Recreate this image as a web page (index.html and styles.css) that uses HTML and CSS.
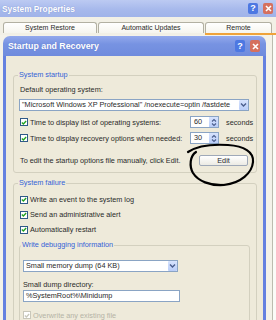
FILE: index.html
```html
<!DOCTYPE html>
<html>
<head>
<meta charset="utf-8">
<link rel="stylesheet" href="styles.css">
</head>
<body>
<div class="sysprops">
  <div class="outer-title">
    <span class="title">System Properties</span>
    <span class="tbtns">
      <span class="tb help">?</span>
      <span class="tb close"><svg width="7" height="7" viewBox="0 0 7 7"><path d="M1 1L6 6M6 1L1 6" stroke="#fff" stroke-width="1.6"/></svg></span>
    </span>
  </div>
  <div class="tabs">
    <div class="tab t1">System Restore</div>
    <div class="tab t2">Automatic Updates</div>
    <div class="tab t3">Remote</div>
  </div>
  <div class="tabline"></div>
  <div class="panel"><div class="panel-edge"></div></div>
</div>

<div class="dialog">
  <div class="dlg-title">
    <span class="title big">Startup and Recovery</span>
    <span class="tbtns">
      <span class="tb help">?</span>
      <span class="tb close"><svg width="7" height="7" viewBox="0 0 7 7"><path d="M1 1L6 6M6 1L1 6" stroke="#fff" stroke-width="1.6"/></svg></span>
    </span>
  </div>
  <div class="dlg-body">
    <fieldset class="grp g1">
      <legend>System startup</legend>
      <div class="lbl">Default operating system:</div>
      <div class="select wide">
        <span class="val">"Microsoft Windows XP Professional" /noexecute=optin /fastdete</span>
        <span class="dd"><svg width="7" height="6" viewBox="0 0 7 6"><path d="M1 1.5L3.5 4L6 1.5" fill="none" stroke="#4a5d8c" stroke-width="1.4"/></svg></span>
      </div>
      <div class="row r1">
        <span class="cb"><svg width="7" height="7" viewBox="0 0 7 7"><path d="M1 3.5L2.8 5.3L6 1.8" fill="none" stroke="#22a322" stroke-width="1.6"/></svg></span>
        <span class="rl">Time to display list of operating systems:</span>
        <span class="spin"><span class="sv">60</span><span class="sa"><svg width="6" height="9" viewBox="0 0 6 9"><path d="M1 3.5L3 1.5L5 3.5M1 5.5L3 7.5L5 5.5" fill="none" stroke="#4a5d8c" stroke-width="1.1"/></svg></span></span>
        <span class="sec">seconds</span>
      </div>
      <div class="row r2">
        <span class="cb"><svg width="7" height="7" viewBox="0 0 7 7"><path d="M1 3.5L2.8 5.3L6 1.8" fill="none" stroke="#22a322" stroke-width="1.6"/></svg></span>
        <span class="rl">Time to display recovery options when needed:</span>
        <span class="spin"><span class="sv">30</span><span class="sa"><svg width="6" height="9" viewBox="0 0 6 9"><path d="M1 3.5L3 1.5L5 3.5M1 5.5L3 7.5L5 5.5" fill="none" stroke="#4a5d8c" stroke-width="1.1"/></svg></span></span>
        <span class="sec">seconds</span>
      </div>
      <div class="editrow">
        <span class="el">To edit the startup options file manually, click Edit.</span>
        <span class="btn">Edit</span>
      </div>
    </fieldset>

    <fieldset class="grp g2">
      <legend>System failure</legend>
      <div class="crow"><span class="cb"><svg width="7" height="7" viewBox="0 0 7 7"><path d="M1 3.5L2.8 5.3L6 1.8" fill="none" stroke="#22a322" stroke-width="1.6"/></svg></span><span>Write an event to the system log</span></div>
      <div class="crow"><span class="cb"><svg width="7" height="7" viewBox="0 0 7 7"><path d="M1 3.5L2.8 5.3L6 1.8" fill="none" stroke="#22a322" stroke-width="1.6"/></svg></span><span>Send an administrative alert</span></div>
      <div class="crow"><span class="cb"><svg width="7" height="7" viewBox="0 0 7 7"><path d="M1 3.5L2.8 5.3L6 1.8" fill="none" stroke="#22a322" stroke-width="1.6"/></svg></span><span>Automatically restart</span></div>
      <fieldset class="grp g3">
        <legend>Write debugging information</legend>
        <div class="select small">
          <span class="val">Small memory dump (64 KB)</span>
          <span class="dd"><svg width="7" height="6" viewBox="0 0 7 6"><path d="M1 1.5L3.5 4L6 1.5" fill="none" stroke="#4a5d8c" stroke-width="1.4"/></svg></span>
        </div>
        <div class="lbl dir">Small dump directory:</div>
        <div class="input">%SystemRoot%\Minidump</div>
        <div class="crow dis"><span class="cb"><svg width="7" height="7" viewBox="0 0 7 7"><path d="M1 3.5L2.8 5.3L6 1.8" fill="none" stroke="#c8c8bc" stroke-width="1.5"/></svg></span><span>Overwrite any existing file</span></div>
      </fieldset>
    </fieldset>
  </div>
</div>

<svg class="scribble" width="276" height="320" viewBox="0 0 276 320">
  <path d="M196 152 C190 156 189 166 193 173 C198 181 210 186 224 185 C241 183 252 173 253 162 C254 152 244 146 228 145 C212 144 197 146 188 152" fill="none" stroke="#000" stroke-width="2.2" stroke-linecap="round"/>
</svg>
</body>
</html>
```

FILE: styles.css
```css
* { box-sizing: border-box; }
html, body { margin: 0; padding: 0; }
body {
  width: 276px;
  height: 320px;
  overflow: hidden;
  position: relative;
  background: #f2f0e6;
  font-family: "Liberation Sans", Arial, sans-serif;
  font-size: 7.3px;
  color: #2a2a2a;
}

/* outer window */
.sysprops { height: 320px; display: flex; flex-direction: column; }
.outer-title {
  height: 17px;
  flex: none;
  background: linear-gradient(#bccaf2, #a7b9ec 55%, #a0b3e9);
  display: flex;
  align-items: center;
  padding: 0 3px 0 2px;
}
.title {
  flex: 1;
  color: #fff;
  font-weight: bold;
  font-size: 8.3px;
  text-shadow: 0 0 1px rgba(60, 80, 160, .45);
}
.title.big { font-size: 8.8px; }
.tbtns { display: flex; gap: 5px; }
.tb {
  width: 10px;
  height: 11px;
  border-radius: 2px;
  display: flex;
  align-items: center;
  justify-content: center;
  color: #fff;
  font-weight: bold;
  font-size: 9px;
  line-height: 1;
}
.help { background: #4d78e2; }
.close { background: #d5705e; }

.tabs {
  display: flex;
  gap: 1px;
  margin-top: 5px;
  padding-left: 3px;
  height: 11px;
  flex: none;
}
.tab {
  border: 1px solid #b2b0a2;
  border-bottom: none;
  border-radius: 3px 3px 0 0;
  background: linear-gradient(#ffffff, #f6f5ee);
  text-align: center;
  font-size: 7px;
  line-height: 10px;
}
.t1 { width: 94px; }
.t2 { width: 106px; }
.t3 { width: 67px; }
.tabline {
  height: 2px;
  flex: none;
  margin-left: 205px;
  background: #f0a33a;
}
.panel {
  flex: 1;
  display: flex;
  justify-content: flex-end;
  background: #f4f2e9;
}
.panel-edge {
  width: 4px;
  border-left: 1px solid #bcbcae;
  background: #fbfbf7;
}

/* inner dialog */
.dialog {
  position: absolute;
  left: 3px;
  top: 36px;
  width: 263px;
  height: 284px;
  overflow: hidden;
  display: flex;
  flex-direction: column;
}
.dlg-title {
  height: 20px;
  flex: none;
  border-radius: 7px 7px 0 0;
  background: linear-gradient(#93a9ec, #7793e2 40%, #6f8bdd);
  display: flex;
  align-items: center;
  padding: 0 6px 0 5px;
}
.dlg-title .tb { width: 10px; height: 12px; }
.dlg-body {
  flex: 1;
  min-height: 0;
  overflow: hidden;
  background: #eeeada;
  border-left: 3px solid #6581e0;
  border-right: 3px solid #6581e0;
  padding: 14px 6px 0 7px;
}

.grp {
  margin: 0;
  border: 1px solid #d3d0bf;
  border-radius: 3px;
  min-width: 0;
}
.grp legend {
  color: #3462d8;
  line-height: 10px;
  padding: 0 1px;
  margin-left: -2px;
}
.g1 { padding: 5px 6px 6px 6px; }
.g2 { margin-top: 5px; padding: 4px 6px 0 6px; height: 150px; }
.g3 { margin: 3px 0 0 -1px; padding: 10px 3px 0 3px; height: 90px; }

.lbl { line-height: 10px; }
.select, .input {
  display: flex;
  height: 12px;
  background: #fff;
  border: 1px solid #8aa4c4;
  align-items: center;
}
.val {
  flex: 1;
  white-space: nowrap;
  overflow: hidden;
  padding-left: 2px;
  line-height: 10px;
}
.dd {
  width: 9px;
  height: 10px;
  background: linear-gradient(#d7e3fd, #b9cdf8);
  border-radius: 1px;
  display: flex;
  align-items: center;
  justify-content: center;
}
.select.wide { margin: 4px 0 0 -1px; width: 230px; }

.row { display: flex; align-items: center; height: 12px; }
.r1 { margin-top: 5px; }
.r2 { margin-top: 4px; }
.cb {
  width: 8px;
  height: 8px;
  flex: none;
  background: #fff;
  border: 1px solid #305a88;
  display: flex;
  align-items: center;
  justify-content: center;
  margin-right: 2px;
}
.rl { flex: 1; white-space: nowrap; }
.spin {
  width: 29px;
  height: 12px;
  display: flex;
  background: #fff;
  border: 1px solid #8aa4c4;
  margin-right: 7px;
}
.sv { flex: 1; padding-left: 3px; line-height: 10px; }
.sa {
  width: 9px;
  background: linear-gradient(#d7e3fd, #b9cdf8);
  display: flex;
  align-items: center;
  justify-content: center;
}
.sec { width: 24px; white-space: nowrap; }

.editrow { display: flex; align-items: center; margin-top: 11px; height: 11px; }
.el { flex: 1; white-space: nowrap; }
.btn {
  width: 49px;
  height: 11px;
  margin-right: 2px;
  border: 1px solid #9fa9b8;
  border-radius: 2px;
  background: linear-gradient(#ffffff, #ecebe4);
  text-align: center;
  line-height: 9px;
}

.crow { display: flex; align-items: center; height: 15px; white-space: nowrap; }
.select.small { width: 155px; }
.lbl.dir { margin-top: 8px; }
.input { width: 157px; padding-left: 2px; line-height: 10px; }
.crow.dis { margin-top: 6px; height: 14px; color: #b5b3a6; }
.crow.dis .cb { border-color: #c9c7ba; }

.scribble {
  position: absolute;
  left: 0;
  top: 0;
  pointer-events: none;
}
```
